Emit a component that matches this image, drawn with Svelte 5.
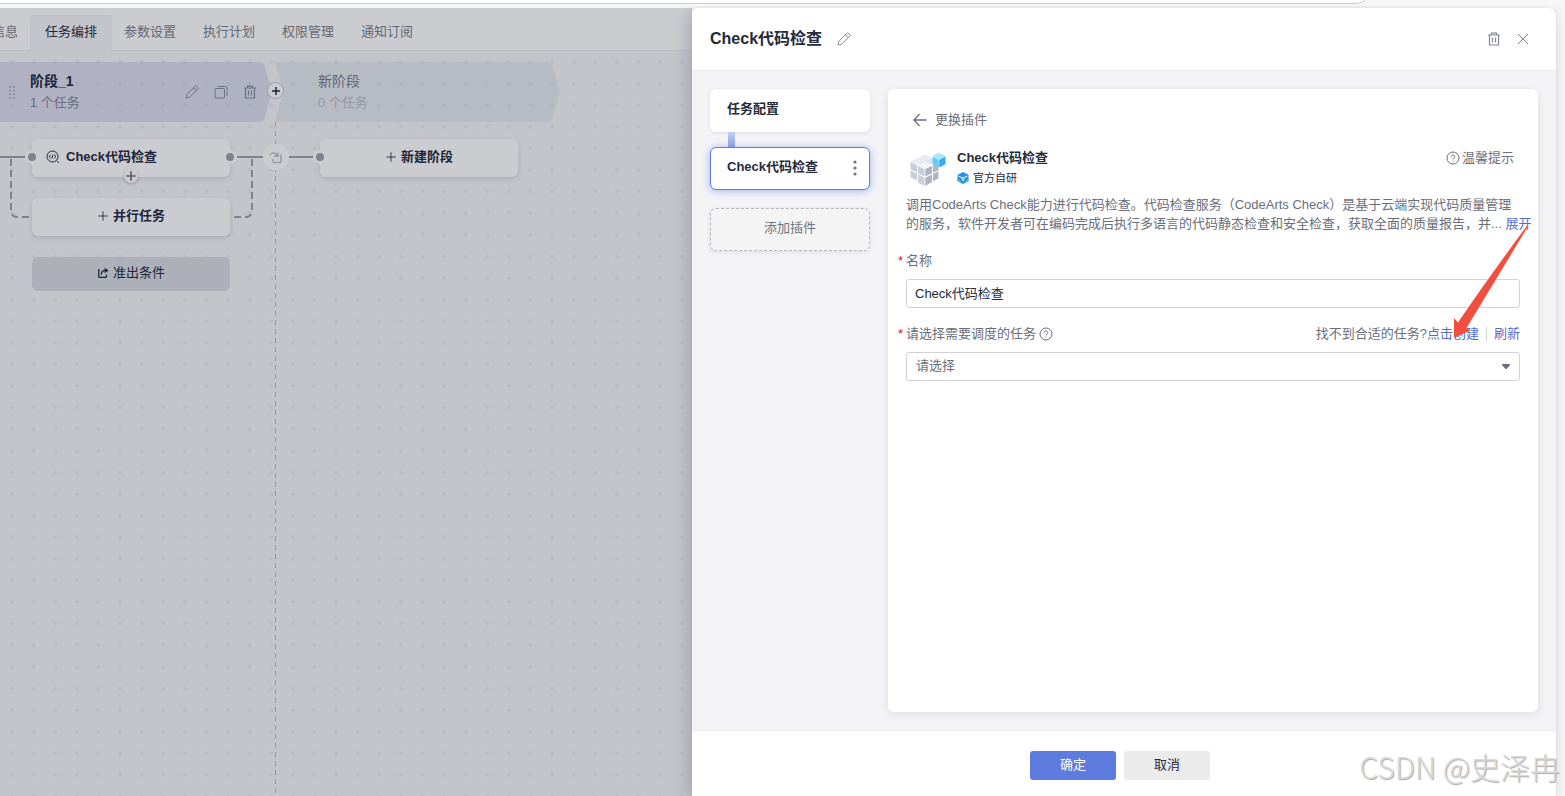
<script>
  const tabs = ["基本信息", "任务编排", "参数设置", "执行计划", "权限管理", "通知订阅"];
  let activeTab = $state("任务编排");

  let taskName = $state("Check代码检查");
  let selectedJob = $state("");
</script>

{#snippet pencil()}
  <svg class="icon" viewBox="0 0 14 14" aria-hidden="true">
    <path d="M1 13l.8-3.6 8-8a1.3 1.3 0 0 1 1.9 0l.9.9a1.3 1.3 0 0 1 0 1.9l-8 8zM8.4 2.8l2.8 2.8" />
  </svg>
{/snippet}

{#snippet trash()}
  <svg class="icon trash" viewBox="0 0 14 14" aria-hidden="true">
    <path d="M1 3h12M4.5 3V1.2h5V3M2.5 3v10h9V3M5.5 5.5v5M8.5 5.5v5" />
  </svg>
{/snippet}

{#snippet help()}
  <svg class="icon" viewBox="0 0 14 14" aria-hidden="true">
    <circle cx="7" cy="7" r="6" />
    <path d="M5.2 5.6a1.8 1.8 0 1 1 2.7 1.6c-.6.3-.9.6-.9 1.2M7 9.6v1" />
  </svg>
{/snippet}

{#snippet plus()}
  <svg class="icon" viewBox="0 0 14 14" aria-hidden="true">
    <path d="M7 1.5v11M1.5 7h11" />
  </svg>
{/snippet}

<div class="window">
  <div class="address-strip"><div class="address"></div></div>

  <div class="workspace">
    <main class="pipeline">
      <nav class="tabs">
        {#each tabs as tab}
          <button class="tab" class:active={tab === activeTab} onclick={() => (activeTab = tab)}>{tab}</button>
        {/each}
      </nav>

      <div class="canvas">
        <svg class="dots" aria-hidden="true">
          <defs>
            <pattern id="grid" x="1.3" y="0.2" width="21.6" height="21.6" patternUnits="userSpaceOnUse">
              <circle cx="10.8" cy="10.8" r="1.9" fill="#b8bac3" />
            </pattern>
          </defs>
          <rect width="100%" height="100%" fill="url(#grid)" />
        </svg>

        <section class="stage">
          <header class="stage-head">
            <svg class="stage-shape" viewBox="0 0 288 60" aria-hidden="true">
              <path fill="#7b82b4" fill-opacity=".27" d="M0 0h272q4 0 5.400 4l7.600 26-7.600 26q-1.400 4-5.400 4H0z" />
            </svg>
            <svg class="grip" viewBox="0 0 6 13" aria-hidden="true">
              {#each [1, 4.6, 8.2, 11.8] as y}
                <circle cx="1" cy={y} r=".9" />
                <circle cx="5" cy={y} r=".9" />
              {/each}
            </svg>
            <div class="stage-text">
              <strong>阶段_1</strong>
              <span>1 个任务</span>
            </div>
            <div class="stage-tools">
              <button aria-label="编辑">{@render pencil()}</button>
              <button aria-label="复制">
                <svg class="icon" viewBox="0 0 14 14" aria-hidden="true">
                  <path d="M3.500 1.500h8q1.500 0 1.500 1.500v8M2 3.500h7.500q1 0 1 1V12q0 1-1 1H2q-1 0-1-1V4.500q0-1 1-1z" />
                </svg>
              </button>
              <button aria-label="删除">{@render trash()}</button>
            </div>
          </header>

          <svg class="wires" viewBox="0 0 288 100" aria-hidden="true">
            <path d="M0 18h38M250 18h38" />
            <path class="dash" d="M24 20v51q0 7 7 7h14M265 20v51q0 7-7 7h-15" />
          </svg>

          <div class="cards">
            <div class="card task">
              <svg class="icon check" viewBox="0 0 14 14" aria-hidden="true">
                <circle cx="6.500" cy="6.500" r="5.500" />
                <path d="M10.500 10.500L13 13M4.800 4.800L3 6.500l1.800 1.700M8.200 4.800L10 6.500 8.200 8.200M7 4.500L6 8.500" />
              </svg>
              <span>Check代码检查</span>
              <i class="port left"></i>
              <i class="port right"></i>
              <button class="append" aria-label="添加任务">{@render plus()}</button>
            </div>
            <button class="card">{@render plus()}并行任务</button>
            <button class="card gate">
              <svg class="icon bold" viewBox="0 0 14 14" aria-hidden="true">
                <path d="M3 3.500H2v7.500q0 1 1 1h7q1 0 1-1V9M5 9c0-3.500 2-5 5-5" />
                <path class="solid" d="M9 .8L13.500 4 9 7.200z" />
              </svg>
              准出条件
            </button>
          </div>
        </section>

        <section class="stage next">
          <header class="stage-head">
            <svg class="stage-shape" viewBox="0 0 288 60" aria-hidden="true">
              <path fill="#98a5b6" fill-opacity=".3" d="M2 0h270q4 0 5.400 4l7.600 26-7.600 26q-1.400 4-5.400 4H2q-2 0-1.500-2L8 30 .5 2Q0 0 2 0z" />
            </svg>
            <div class="stage-text">
              <strong>新阶段</strong>
              <span>0 个任务</span>
            </div>
            <button class="insert" aria-label="插入阶段">{@render plus()}</button>
          </header>

          <svg class="wires" viewBox="0 0 288 100" aria-hidden="true">
            <path d="M0 18h38" />
          </svg>

          <div class="cards">
            <button class="loop" aria-label="串行">
              <svg class="icon bold" viewBox="0 0 14 14" aria-hidden="true">
                <path d="M1 5.500C2 2.500 6 2 8 5M4 9v2.500q0 1 1 1h6q1 0 1-1V5.500h-1.500" />
                <path class="solid" d="M9.500 1.500V7H4.500z" />
              </svg>
            </button>
            <button class="card">
              <i class="port left"></i>
              {@render plus()}新建阶段
            </button>
          </div>
        </section>
      </div>
    </main>

    <aside class="drawer">
      <header class="drawer-head">
        <h1>Check代码检查</h1>
        <button aria-label="重命名">{@render pencil()}</button>
        <span class="spacer"></span>
        <button aria-label="删除">{@render trash()}</button>
        <button aria-label="关闭">
          <svg class="icon" viewBox="0 0 14 14" aria-hidden="true">
            <path d="M2 2l10 10M12 2L2 12" />
          </svg>
        </button>
      </header>

      <div class="drawer-body">
        <div class="steps">
          <button class="step">任务配置</button>
          <div class="step-link"></div>
          <button class="step current">
            Check代码检查
            <svg class="more" viewBox="0 0 4 16" aria-hidden="true">
              <circle cx="2" cy="2" r="1.600" /><circle cx="2" cy="8" r="1.600" /><circle cx="2" cy="14" r="1.600" />
            </svg>
          </button>
          <button class="step add">添加插件</button>
        </div>

        <div class="panel">
          <button class="back">
            <svg class="icon" viewBox="0 0 14 14" aria-hidden="true">
              <path stroke-width="1.300" d="M13.500 7H1M6.500 1L.8 7l5.700 6" />
            </svg>
            更换插件
          </button>

          <div class="plugin">
            <svg class="cube" viewBox="0 0 36 36" aria-hidden="true">
              <path fill="#e9ecf3" d="M15 2.500l7 3.500-7 3.500L8 6zM7.500 6l7 3.500-7 3.500-7-3.500z" />
              <path fill="#dfe3ec" d="M22 6l1 5-8 4-7-3.500L15 9z" />
              <path fill="#c9cedb" d="M.5 10l6.500 3.200v7.300L.5 17.300zM8 13.800l6.500 3.200v7.500L8 21.200zM.5 18.500L7 21.700v6.800L.5 25.200zM8 22.300l6.500 3.400v8.300L8 30.500z" />
              <path fill="#afb5c4" d="M15.300 17l6.700-3.200v7.400l-6.700 3.300zM23 13.500l5.500-2.500v7.200L23 20.800zM15.300 25.700l6.700-3.300v7.600l-6.700 4zM23 22l5.500-2.700v7L23 29.500z" />
              <path fill="#f3f5f9" d="M15 9.700l7 3.400-7 3.300-7-3.300z" />
              <path fill="#a5e5ff" d="M29 .8L35.500 4 29 7.400 22.500 4z" />
              <path fill="#62ccfb" d="M22.500 4.600L28.700 7.800v7.700l-6.200-3.200z" />
              <path fill="#35aaf0" d="M29.200 7.800l6.300-3.200v7.700l-6.300 3.200z" />
            </svg>
            <div class="plugin-text">
              <h2>Check代码检查</h2>
              <p>
                <svg class="badge" viewBox="0 0 12 12" aria-hidden="true">
                  <path fill="#2f8fe8" d="M6 0l5.500 2.800v6.400L6 12 .5 9.200V2.800z" />
                  <path fill="#43c3e0" d="M.5 6L6 12l5.500-6v3.200L6 12 .5 9.200z" />
                  <path fill="none" stroke="#e4f6ff" d="M1.500 4l3 1.500L6 9l1.500-3.500 3-1.500M4.500 5.500h3" />
                </svg>
                官方自研
              </p>
            </div>
            <button class="tips">{@render help()}温馨提示</button>
          </div>

          <p class="description">
            调用CodeArts Check能力进行代码检查。代码检查服务（CodeArts Check）是基于云端实现代码质量管理<br />
            的服务，软件开发者可在编码完成后执行多语言的代码静态检查和安全检查，获取全面的质量报告，并...
            <a href="#expand">展开</a>
          </p>

          <div class="field">
            <div class="label-row"><label for="task-name"><b>*</b>名称</label></div>
            <input id="task-name" type="text" bind:value={taskName} />
          </div>

          <div class="field">
            <div class="label-row">
              <label for="job"><b>*</b>请选择需要调度的任务</label>
              {@render help()}
              <span class="spacer"></span>
              <span>找不到合适的任务?</span>
              <a href="#create">点击创建</a>
              <i class="divider"></i>
              <a href="#refresh">刷新</a>
            </div>
            <div class="select">
              <select id="job" bind:value={selectedJob}>
                <option value="">请选择</option>
              </select>
              <svg class="caret" viewBox="0 0 8 5" aria-hidden="true"><path d="M0 .5q0-.5.500-.5h7q.5 0 .5.500v.5L4.500 5h-1L0 1z" /></svg>
            </div>
          </div>

          <svg class="pointer" viewBox="0 0 78 114" aria-hidden="true">
            <path fill="#f24e40" d="M77 1.500L75.800 1Q38 52 7 97.500L3 93v20l16-7.500-3.500-2.500z" />
          </svg>
        </div>
      </div>

      <footer class="drawer-foot">
        <button class="primary">确定</button>
        <button>取消</button>
      </footer>
    </aside>
  </div>

  <div class="watermark">CSDN @史泽冉</div>
</div>

<style>
  :global(body) {
    margin: 0;
  }
  .window {
    position: relative;
    display: flex;
    flex-direction: column;
    min-height: 100vh;
    overflow: hidden;
    background: #f6f6f6;
    color: #6a6e7a;
    font-family: "Liberation Sans", "Noto Sans CJK SC", sans-serif;
    font-size: 13px;
    line-height: 20px;
  }
  .window * {
    box-sizing: border-box;
  }
  button {
    padding: 0;
    border: 0;
    background: none;
    color: inherit;
    font: inherit;
    cursor: pointer;
  }
  a {
    color: #526ecc;
    text-decoration: none;
  }
  .icon {
    flex: none;
    display: block;
    width: 14px;
    height: 14px;
    fill: none;
    stroke: currentColor;
    stroke-width: 1;
  }
  .icon.bold {
    stroke-width: 1.5;
  }
  .icon.trash {
    stroke-width: 1.2;
  }
  .icon .solid {
    fill: currentColor;
    stroke: none;
  }
  .spacer {
    flex: 1;
  }

  .address-strip {
    height: 8px;
    padding-right: 200px;
  }
  .address {
    height: 4px;
    border: solid #cdcdcd;
    border-width: 0 1px 1px 0;
    border-bottom-right-radius: 12px 4px;
    background: #fff;
  }
  .workspace {
    flex: 1;
    display: flex;
    padding-right: 8px;
  }

  /* pipeline, dimmed behind the drawer */
  .pipeline {
    flex: 1;
    min-width: 0;
    display: flex;
    flex-direction: column;
    overflow: hidden;
    background: #c4c5ca;
  }
  .tabs {
    display: flex;
    align-items: flex-end;
    height: 43px;
    padding-top: 7px;
    border-bottom: 1px solid #bdbfc5;
    background: #cbccd0;
  }
  .tab {
    flex: none;
    height: 36px;
    margin: 0 -3px -1px 0;
    padding: 0 14px 4px;
    border: 1px solid transparent;
    border-bottom: 0;
    border-radius: 3px 3px 0 0;
    color: #646874;
  }
  .tab:first-child {
    margin-left: -49px;
  }
  .tab.active {
    border-color: #bfc1c7;
    background: #c4c5ca;
    color: #23283a;
  }
  .canvas {
    position: relative;
    flex: 1;
    display: flex;
    margin-left: -13px;
    padding-top: 11px;
  }
  .dots {
    position: absolute;
    inset: 0 0 0 13px;
    width: 100%;
    height: 100%;
  }
  .stage {
    position: relative;
    flex: none;
    width: 288px;
  }
  .stage.next::before {
    content: "";
    position: absolute;
    top: 60px;
    bottom: 0;
    left: 0;
    width: 1px;
    background: repeating-linear-gradient(#9699a3 0 5px, transparent 5px 9px);
  }
  .stage-head {
    position: relative;
    display: flex;
    align-items: center;
    height: 60px;
    padding: 0 18px 0 43px;
  }
  .stage-shape {
    position: absolute;
    inset: 0;
  }
  .grip {
    position: absolute;
    left: 22px;
    width: 6px;
    height: 13px;
    fill: #777b8b;
  }
  .stage-text {
    position: relative;
    flex: 1;
    display: flex;
    flex-direction: column;
    line-height: 22px;
  }
  .stage-text strong {
    color: #20253a;
    font-size: 14px;
  }
  .next .stage-text strong {
    color: #5f6472;
    font-weight: 400;
  }
  .next .stage-text span {
    color: #9599a5;
  }
  .stage-tools {
    position: relative;
    display: flex;
    gap: 15px;
    color: #6d7080;
  }
  .insert,
  .append,
  .loop {
    position: absolute;
    display: grid;
    place-items: center;
    border-radius: 50%;
    background: #cbccd0;
  }
  .insert {
    left: -8px;
    top: 20px;
    width: 17px;
    height: 17px;
    border: 1px solid #999ca6;
    color: #1b2033;
  }
  .insert .icon,
  .append .icon {
    width: 10px;
    height: 10px;
    stroke-width: 2;
  }
  .wires {
    position: absolute;
    top: 77px;
    left: 0;
    width: 288px;
    height: 100px;
    fill: none;
    stroke: #7f828e;
    stroke-width: 2;
  }
  .wires .dash {
    stroke-dasharray: 7 4;
  }
  .cards {
    position: relative;
    display: flex;
    flex-direction: column;
    gap: 21px;
    padding: 17px 45px 0;
  }
  .card {
    position: relative;
    display: flex;
    align-items: center;
    justify-content: center;
    gap: 4px;
    height: 38px;
    padding-bottom: 3px;
    border-radius: 6px;
    background: #cbccd0;
    box-shadow: 0 2px 5px rgba(80, 84, 105, 0.2);
    color: #20253a;
    font-weight: 700;
  }
  .card .icon {
    width: 12px;
    height: 12px;
  }
  .task {
    justify-content: flex-start;
    gap: 6px;
    padding: 0 14px 3px;
  }
  .card .check {
    width: 14px;
    height: 14px;
  }
  .gate {
    height: 34px;
    padding-bottom: 2px;
    background: #adb0b9;
    box-shadow: none;
    font-weight: 400;
  }
  .port {
    position: absolute;
    top: 11px;
    width: 14px;
    height: 14px;
    border: 3px solid #cbccd0;
    border-radius: 50%;
    background: #7f828e;
  }
  .port.left {
    left: -7px;
  }
  .port.right {
    right: -7px;
  }
  .append {
    left: 92px;
    bottom: -6px;
    width: 14px;
    height: 14px;
    box-shadow: 0 1px 3px rgba(60, 64, 85, 0.35);
    color: #5c606e;
  }
  .loop {
    top: 22px;
    left: -12px;
    width: 26px;
    height: 26px;
    color: #999ca5;
  }

  /* drawer */
  .drawer {
    position: relative;
    flex: none;
    display: flex;
    flex-direction: column;
    width: 865px;
    border-right: 1px solid #e2e2e5;
    border-radius: 6px 8px 0 0;
    background: #fff;
    box-shadow: -4px 4px 16px rgba(70, 70, 100, 0.25);
    clip-path: inset(-2px -6px 0 -30px);
  }
  .drawer-head {
    display: flex;
    align-items: center;
    gap: 15px;
    height: 63px;
    padding: 0 26px 0 18px;
    border-bottom: 1px solid #ededf0;
    color: #858893;
  }
  h1,
  h2,
  p {
    margin: 0;
  }
  h1 {
    color: #252b3a;
    font-size: 16px;
    line-height: 24px;
  }
  .drawer-body {
    flex: 1;
    display: flex;
    gap: 18px;
    padding: 18px;
    background: #f4f4f7;
  }
  .steps {
    display: flex;
    flex-direction: column;
    width: 160px;
  }
  .step {
    display: flex;
    align-items: center;
    justify-content: space-between;
    height: 43px;
    padding: 0 12px 4px 17px;
    border-radius: 6px;
    background: #fff;
    box-shadow: 0 1px 4px rgba(50, 50, 80, 0.12);
    color: #252b3a;
    font-weight: 700;
  }
  .step.current {
    padding-left: 16px;
    border: 1px solid #5e7ce0;
    box-shadow: 0 1px 9px rgba(94, 124, 224, 0.55);
  }
  .step.add {
    justify-content: center;
    margin-top: 18px;
    padding: 0 0 4px;
    border: 1px dashed #b5b6bb;
    background: #f4f4f4;
    color: #71757f;
    font-weight: 400;
  }
  .step-link {
    width: 7px;
    height: 15px;
    margin-left: 18px;
    background: linear-gradient(#c3cef5, #8ea4ea);
  }
  .more {
    width: 4px;
    height: 16px;
    margin-top: 2px;
    fill: #71757f;
  }
  .panel {
    position: relative;
    flex: 1;
    min-width: 0;
    padding: 21px 18px;
    border-radius: 6px;
    background: #fff;
    box-shadow: 0 2px 8px rgba(50, 50, 80, 0.12);
  }
  .back {
    display: flex;
    align-items: center;
    gap: 8px;
    margin-left: 7px;
  }
  .plugin {
    display: flex;
    margin-top: 18px;
    padding-left: 4px;
  }
  .cube {
    width: 36px;
    height: 36px;
    margin: 4px 11px 0 0;
  }
  .plugin-text {
    flex: 1;
    color: #252b3a;
  }
  h2 {
    font-size: 13px;
    line-height: 20px;
  }
  .plugin-text p {
    display: flex;
    align-items: center;
    gap: 4px;
    font-size: 11px;
  }
  .badge {
    width: 12px;
    height: 12px;
  }
  .tips {
    display: flex;
    align-items: center;
    gap: 2px;
    height: 20px;
    margin-right: 6px;
  }
  .description {
    margin: 7px -12px 0 0;
    line-height: 19px;
    white-space: nowrap;
  }
  .field {
    margin-top: 16px;
  }
  .description + .field {
    margin-top: 18px;
  }
  .label-row {
    display: flex;
    align-items: center;
    margin: 0 0 8px -8px;
  }
  .label-row .icon {
    margin-left: 3px;
  }
  label {
    display: flex;
  }
  label b {
    width: 8px;
    color: #f00f19;
    font-weight: 400;
  }
  .divider {
    width: 1px;
    height: 14px;
    margin: 0 7px;
    background: #d5d6da;
  }
  input,
  select {
    display: block;
    width: 100%;
    height: 29px;
    padding: 0 8px 2px;
    border: 1px solid #d2d3d6;
    border-radius: 3px;
    background: #fff;
    color: #252b3a;
    font: inherit;
    outline: 0;
  }
  select {
    padding-left: 9px;
    appearance: none;
    color: #6a6e7a;
  }
  .select {
    position: relative;
  }
  .caret {
    position: absolute;
    top: 12px;
    right: 10px;
    width: 8px;
    height: 5px;
    fill: #6b6e78;
  }
  .pointer {
    position: absolute;
    top: 136px;
    right: 9px;
    width: 78px;
    height: 114px;
    pointer-events: none;
  }
  .drawer-foot {
    display: flex;
    justify-content: center;
    gap: 8px;
    padding: 20px 8px 16px 0;
    border-top: 1px solid #ededf0;
  }
  .drawer-foot button {
    width: 86px;
    height: 29px;
    padding-bottom: 2px;
    border-radius: 3px;
    background: #ebebeb;
    color: #252b3a;
  }
  .drawer-foot .primary {
    background: #5e7ce0;
    color: #fff;
  }

  .watermark {
    position: absolute;
    right: 5px;
    bottom: 8px;
    color: #d9d9d9;
    font-family: "Noto Sans CJK SC", sans-serif;
    font-size: 30px;
    font-weight: 300;
    line-height: 44px;
    text-shadow: 1px 1px 1px #a8a8a8;
    white-space: nowrap;
    pointer-events: none;
  }
</style>
